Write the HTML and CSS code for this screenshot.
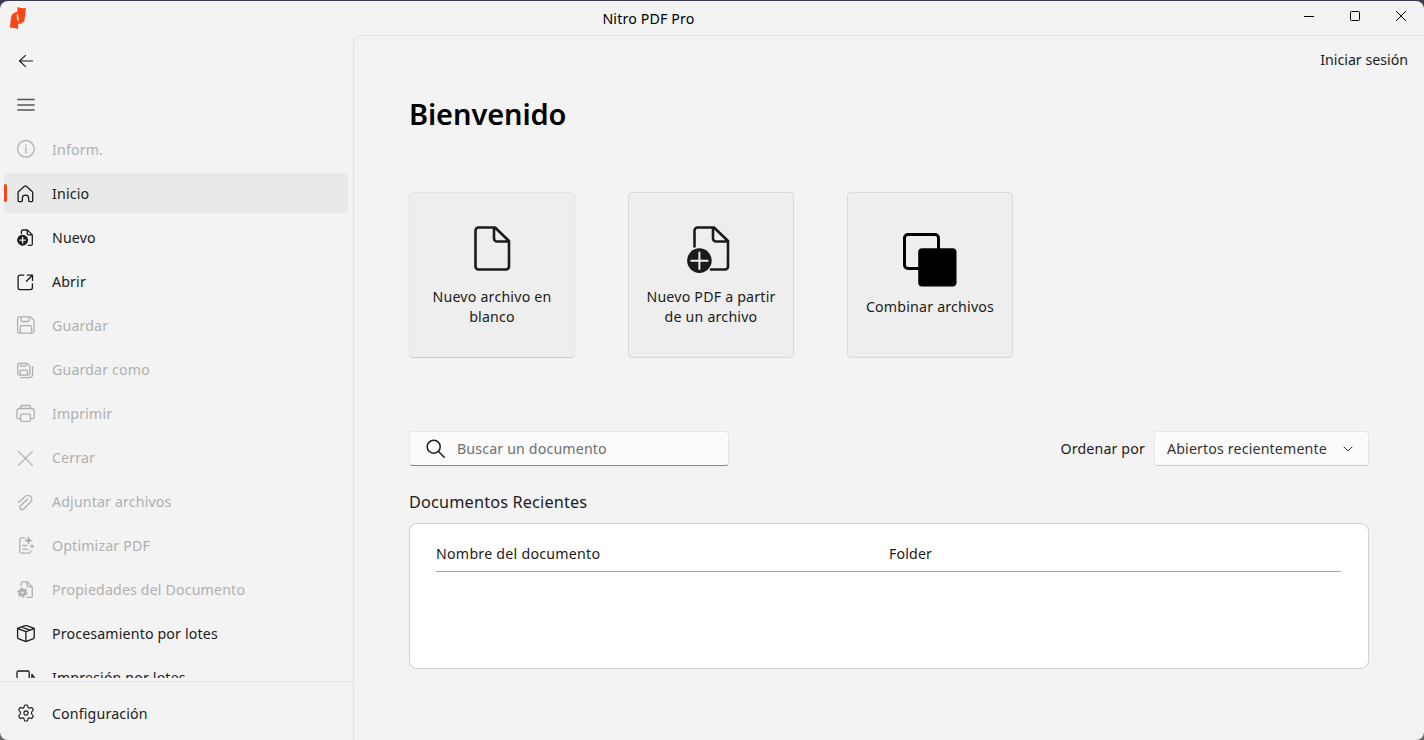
FILE: index.html
```html
<!DOCTYPE html>
<html lang="es">
<head>
    <meta charset="UTF-8">
    <meta name="viewport" content="width=device-width, initial-scale=1.0">
    <title>Nitro PDF Pro</title>
    <link rel="stylesheet" href="styles.css">
</head>
<body>
    <div class="window">
        <header class="titlebar">
            <svg class="logo" width="18" height="24" viewBox="0 0 18 24">
                <path d="M8.600 1Q12.500 2.500 16.900 2.100L15.700 12.800Q15.200 17 11 17.800L9.200 18 9 23Q5 21.500 .900 21.500L2 11.500Q2.800 6.800 8.300 5.800Z" fill="#fa4616"/>
                <path d="M8.300 6.500Q8.300 8.700 9.400 9.500Q10.300 12.500 9.200 16.500Q9 14.500 8 13.800Q7 10.500 8.300 6.500Z" fill="#fbd5c9"/>
            </svg>
            <span class="app-title">Nitro PDF Pro</span>
            <div class="window-buttons">
                <svg width="12" height="12" viewBox="0 0 12 12"><path d="M1 6.500h10"/></svg>
                <svg width="12" height="12" viewBox="0 0 12 12"><rect x="1.500" y="1.500" width="9" height="9" rx="1"/></svg>
                <svg width="12" height="12" viewBox="0 0 12 12"><path d="M1 1l10 10M11 1L1 11"/></svg>
            </div>
        </header>
        <div class="layout">
            <nav class="sidebar">
                <div class="nav-list">
                    <a class="nav-item">
                        <svg class="icon thin" viewBox="0 0 20 20"><path d="M16.500 10H3.500M9.500 4.300L3.500 10l6 5.700"/></svg>
                    </a>
                    <a class="nav-item">
                        <svg class="icon menu-icon" viewBox="0 0 20 20"><path d="M1.800 4.500h16.400M1.800 10h16.400M1.800 15h16.400"/></svg>
                    </a>
                    <a class="nav-item disabled">
                        <svg class="icon" viewBox="0 0 20 20"><circle cx="9.900" cy="9.800" r="8.300"/><path d="M9.900 8.700v5.200M9.900 5.600v.900"/></svg>
                        <span>Inform.</span>
                    </a>
                    <a class="nav-item active">
                        <svg class="icon" viewBox="0 0 20 20"><path d="M2.100 9.600c0-.5.2-.9.5-1.200l5.900-5.200c.5-.4 1.300-.4 1.800 0l5.900 5.200c.3.3.5.7.5 1.200v8c0 .6-.4 1-1 1h-2.100c-.6 0-1-.4-1-1v-2.700c0-2-.9-2.700-3.100-2.700s-3.100.7-3.100 2.700v2.700c0 .6-.4 1-1 1H3.100c-.6 0-1-.4-1-1z"/></svg>
                        <span>Inicio</span>
                    </a>
                    <a class="nav-item">
                        <svg class="icon" viewBox="0 0 20 20"><path d="M5.400 6.500v-2c0-.9.6-1.500 1.500-1.500h4.500l4.900 4.900v9c0 .9-.6 1.500-1.500 1.500h-2.400M11.200 3v3.500c0 .9.600 1.400 1.400 1.400h3.600"/><circle cx="6.600" cy="13.200" r="4.800" fill="currentColor"/><path d="M6.600 10.500v5.400M3.900 13.200h5.400" stroke="#f3f3f3"/></svg>
                        <span>Nuevo</span>
                    </a>
                    <a class="nav-item">
                        <svg class="icon" viewBox="0 0 20 20"><path d="M7.800 4.100H4.100a2 2 0 0 0-2 2v10.500a2 2 0 0 0 2 2h10.300a2 2 0 0 0 2-2v-3.800M11.200 4.100h5.300v5.300M16.400 4.200l-6 6"/></svg>
                        <span>Abrir</span>
                    </a>
                    <a class="nav-item disabled">
                        <svg class="icon" viewBox="0 0 20 20"><path d="M3.300 1.800h11l3.700 3.700v10.800c0 1-.7 1.800-1.800 1.800H3.300c-1 0-1.700-.8-1.700-1.800V3.500c0-1 .7-1.700 1.700-1.700zM5.200 1.800v3.400c0 .8.500 1.300 1.300 1.300h5.200c.8 0 1.300-.5 1.300-1.300V1.800M4.200 18.100v-6c0-.9.5-1.400 1.400-1.400h8.600c.9 0 1.400.5 1.400 1.400v6"/></svg>
                        <span>Guardar</span>
                    </a>
                    <a class="nav-item disabled">
                        <svg class="icon" viewBox="0 0 20 20"><path d="M3.300 4.300h7.800l2.800 2.800v7.400c0 1-.6 1.600-1.600 1.600h-9c-.9 0-1.500-.6-1.500-1.600V5.800c0-.9.600-1.500 1.500-1.500zM4.700 4.300v1.900c0 .7.400 1 1 1h3.400c.7 0 1-.4 1-1V4.300M4.200 16v-3.900c0-.7.400-1 1-1h5.200c.7 0 1 .4 1 1V16M4.700 18.600h8.200c2.300 0 3.700-1.400 3.700-3.700V7.600"/></svg>
                        <span>Guardar como</span>
                    </a>
                    <a class="nav-item disabled">
                        <svg class="icon" viewBox="0 0 20 20"><path d="M4.600 15.900H2.700c-1.100 0-1.800-.7-1.800-1.800V7.900c0-1.400 1-2.400 2.500-2.400h12.300c1.500 0 2.500 1 2.500 2.400v6.200c0 1.100-.7 1.800-1.800 1.800h-2M4.600 5.500V3.800c0-.8.5-1.300 1.300-1.300h7.300c.8 0 1.300.5 1.300 1.300v1.700"/><rect x="4.600" y="11.100" width="9.800" height="7.200" rx="1.300"/></svg>
                        <span>Imprimir</span>
                    </a>
                    <a class="nav-item disabled">
                        <svg class="icon" viewBox="0 0 20 20"><path d="M2.400 4.400l14 14M16.400 4.400l-14 14"/></svg>
                        <span>Cerrar</span>
                    </a>
                    <a class="nav-item disabled">
                        <svg class="icon" viewBox="0 0 20 20"><path d="M2.300 11.400l6.300-5.500c1.700-1.500 4.500-1.700 6.100-.4 1.600 1.400 1.600 3.600.1 5.200l-6.900 7c-1 1-2.600 1.100-3.500.2s-.8-2.200.2-3.200l6.900-6.500"/></svg>
                        <span>Adjuntar archivos</span>
                    </a>
                    <a class="nav-item disabled">
                        <svg class="icon" viewBox="0 0 20 20"><path d="M9.200 2.800H5.300c-.9 0-1.500.6-1.500 1.500v12.300c0 .9.600 1.500 1.500 1.500h7.800c.9 0 1.500-.6 1.500-1.500v-.8M6.700 10.500h4M6.700 14.200h5"/><path class="solid" d="M12.500 1.100l1.300 3.100 3.100 1.300-3.100 1.300-1.300 3.200-1.300-3.200-3.100-1.300 3.100-1.300zM16 8.300l.8 2.200 2.200.8-2.200.8-.8 2.200-.8-2.200-2.200-.8 2.200-.8z"/></svg>
                        <span>Optimizar PDF</span>
                    </a>
                    <a class="nav-item disabled">
                        <svg class="icon" viewBox="0 0 20 20"><path d="M5.300 6.500V4.400c0-.9.6-1.500 1.500-1.500h4.500l5 5v9c0 .9-.6 1.500-1.500 1.500h-3.500M11.200 2.900v3.600c0 .9.500 1.400 1.400 1.400h3.600"/><circle cx="6.400" cy="13.600" r="2.500" stroke-width="2.600"/><circle cx="6.400" cy="13.600" r="4.200" stroke-width="1.800" stroke-linecap="butt" stroke-dasharray="2.200 2.200"/></svg>
                        <span>Propiedades del Documento</span>
                    </a>
                    <a class="nav-item">
                        <svg class="icon" viewBox="0 0 20 20"><path d="M9.200 2.700c.5-.2.900-.2 1.400 0l7 2.500c.4.2.6.4.6.9v8.500c0 .5-.2.800-.7 1l-7 2.700c-.4.2-.8.2-1.200 0l-7-2.700c-.5-.2-.7-.5-.7-1V6.100c0-.5.2-.7.600-.9zM1.800 5.700l8.100 3 8.100-3M9.900 8.700v9.700M5.700 4.200l8.200 3"/></svg>
                        <span>Procesamiento por lotes</span>
                    </a>
                    <a class="nav-item">
                        <svg class="icon" viewBox="0 0 20 20"><path d="M3.500 14.500H1V5.500C1 4.600 1.600 4 2.500 4h9.200c.9 0 1.500.6 1.500 1.500V14H6M15.900 7.500v8.500H6.500M15.900 7.500l2.600 3.300v5"/></svg>
                        <span>Impresión por lotes</span>
                    </a>
                </div>
                <div class="nav-footer">
                    <a class="nav-item">
                        <svg class="icon gear" viewBox="0 0 20 20"><circle cx="10" cy="10" r="2.100"/><path d="M8.500 2.200Q10 1.800 11.500 2.200L12 4.400Q12.500 5.200 13.500 5.100L15.700 4.500Q16.800 5.600 17.300 7L15.800 8.800Q15.200 10 15.800 11.200L17.300 13Q16.800 14.400 15.700 15.500L13.500 14.900Q12.500 14.800 12 15.600L11.500 17.800Q10 18.200 8.500 17.800L8 15.600Q7.500 14.800 6.500 14.900L4.300 15.500Q3.200 14.400 2.700 13L4.200 11.200Q4.800 10 4.200 8.800L2.700 7Q3.200 5.600 4.300 4.500L6.500 5.100Q7.500 5.200 8 4.400Z"/></svg>
                        <span>Configuración</span>
                    </a>
                </div>
            </nav>
            <main class="content">
                <a class="sign-in">Iniciar sesión</a>
                <h1>Bienvenido</h1>
                <div class="cards">
                    <div class="card raised">
                        <svg width="48" height="50" viewBox="0 0 48 50"><path d="M10.500 2.500h16.500L41 16V41.500a3 3 0 0 1-3 3H10.500a3 3 0 0 1-3-3V5.500a3 3 0 0 1 3-3zM26 2.700v10.800a3 3 0 0 0 3 3h11.500"/></svg>
                        <span>Nuevo archivo en blanco</span>
                    </div>
                    <div class="card">
                        <svg width="48" height="50" viewBox="0 0 48 50"><path d="M7.500 21.500V5.500a3 3 0 0 1 3-3h16.500L41 16V41.500a3 3 0 0 1-3 3H24M26 2.700v10.800a3 3 0 0 0 3 3h11.500"/><circle class="dot" cx="12.400" cy="35.600" r="12.300"/><path class="plus" d="M12.400 27.500v16.400M4.200 35.700h16.400"/></svg>
                        <span>Nuevo PDF a partir de un archivo</span>
                    </div>
                    <div class="card combine">
                        <svg width="54" height="54" viewBox="0 0 54 54"><rect x="1.500" y="1.500" width="34" height="34" rx="3.500"/><rect class="front" x="15.200" y="15.200" width="38.300" height="38.300" rx="4"/></svg>
                        <span>Combinar archivos</span>
                    </div>
                </div>
                <div class="toolbar">
                    <div class="search">
                        <svg width="20" height="20" viewBox="0 0 20 20"><circle cx="7.700" cy="7.700" r="6.500"/><path d="M12.500 12.500l5.700 5.700"/></svg>
                        <span>Buscar un documento</span>
                    </div>
                    <div class="sort">
                        <span class="sort-label">Ordenar por</span>
                        <div class="select">
                            <span>Abiertos recientemente</span>
                            <svg width="10" height="6" viewBox="0 0 10 6"><path d="M1 1L5 5 9 1"/></svg>
                        </div>
                    </div>
                </div>
                <h2>Documentos Recientes</h2>
                <div class="documents">
                    <div class="documents-head">
                        <span class="doc-name">Nombre del documento</span>
                        <span class="doc-folder">Folder</span>
                    </div>
                </div>
            </main>
        </div>
    </div>
</body>
</html>
```
FILE: styles.css
```css
* {
    box-sizing: border-box;
}

body {
    margin: 0;
    height: 740px;
    padding-top: 1px;
    background: linear-gradient(#3b3950 50%, #6b6b6b 50%);
    font-family: "Noto Sans", "Open Sans", sans-serif;
    font-size: 14.2px;
    letter-spacing: 0.15px;
    color: #1b1b1b;
    overflow: hidden;
}

svg {
    display: block;
    flex: none;
    fill: none;
    stroke: currentColor;
    stroke-linecap: round;
    stroke-linejoin: round;
}

.window {
    display: flex;
    flex-direction: column;
    height: 739px;
    background: #f3f3f3;
    border-radius: 8px;
    overflow: hidden;
}

.titlebar {
    display: grid;
    grid-template-columns: 1fr auto 1fr;
    height: 34px;
    flex: none;
}

.logo {
    margin: 5px 0 0 9px;
    stroke: none;
}

.app-title {
    line-height: 35px;
    margin-right: 127px;
    color: #000;
}

.window-buttons {
    display: flex;
    justify-content: flex-end;
    gap: 34px;
    padding: 9px 17px 0 0;
    color: #000;
}

.window-buttons svg {
    stroke-linecap: butt;
}

.layout {
    display: flex;
    flex: 1;
    min-height: 0;
}

/* sidebar */

.sidebar {
    display: flex;
    flex-direction: column;
    width: 353px;
    flex: none;
}

.nav-list {
    display: flex;
    flex-direction: column;
    gap: 4px;
    height: 643px;
    padding: 6px 5px 0 4px;
    overflow: hidden;
}

.nav-item {
    display: flex;
    align-items: center;
    gap: 16px;
    height: 40px;
    flex: none;
    padding-left: 12px;
    border-radius: 4px;
    white-space: nowrap;
}

.nav-item.active {
    background: #e9e9e9;
    position: relative;
}

.nav-item.active::before {
    content: "";
    position: absolute;
    left: 0;
    top: 11px;
    width: 3px;
    height: 18px;
    border-radius: 2px;
    background: #fa4616;
}

.nav-item.disabled {
    color: #b0b0b0;
}

.icon {
    width: 20px;
    height: 20px;
    stroke-width: 1.3;
}

.icon.thin,
.icon.gear {
    stroke-width: 1.1;
}

.menu-icon {
    color: #555;
}

.icon .solid {
    fill: currentColor;
    stroke: none;
}

.nav-footer {
    flex: 1;
    margin-top: 3px;
    padding: 11px 4px 0;
    border-top: 1px solid #e5e5e5;
}

/* main area */

.content {
    display: flex;
    flex-direction: column;
    flex: 1;
    padding: 0 55px;
    border: solid #e3e3e3;
    border-width: 1px 0 0 1px;
    border-top-left-radius: 8px;
}

.sign-in {
    align-self: flex-end;
    height: 20px;
    line-height: 20px;
    margin: 14px -39px 0 0;
    letter-spacing: 0;
}

h1 {
    height: 40px;
    margin: 24px 0 0;
    font-size: 29px;
    font-weight: 600;
    letter-spacing: -0.1px;
    line-height: 40px;
    color: #000;
}

.cards {
    display: flex;
    gap: 53px;
    margin-top: 58px;
}

.card {
    display: flex;
    flex-direction: column;
    align-items: center;
    width: 166px;
    height: 166px;
    padding: 32px 14px 0;
    background: #eee;
    border: 1px solid #d9d9d9;
    border-radius: 4px;
    text-align: center;
    line-height: 20px;
    letter-spacing: 0.2px;
}

.card.raised {
    border-color: #e3e3e3;
    border-bottom-color: #c8c8c8;
}

.card svg {
    stroke-width: 2.6;
    margin-bottom: 12px;
}

.card .dot {
    fill: currentColor;
    stroke: none;
}

.card .plus {
    stroke: #eee;
    stroke-width: 2;
}

.card.combine {
    padding: 40px 10px 0;
}

.card.combine svg {
    margin-bottom: 10px;
    color: #000;
    stroke-width: 3;
}

.card .front {
    fill: #000;
    stroke: none;
}

.toolbar {
    display: flex;
    justify-content: space-between;
    height: 35px;
    margin-top: 73px;
}

.search {
    display: flex;
    align-items: center;
    gap: 11px;
    width: 320px;
    padding-left: 16px;
    background: #fbfbfb;
    border: 1px solid #e5e5e5;
    border-bottom-color: #868686;
    border-radius: 4px;
    color: #6e6e6e;
}

.search svg {
    color: #1b1b1b;
    stroke-width: 1.5;
}

.sort {
    display: flex;
    align-items: center;
    gap: 9px;
}

.select {
    display: flex;
    align-items: center;
    justify-content: space-between;
    width: 215px;
    height: 35px;
    padding: 0 15px 0 12px;
    background: #fbfbfb;
    border: 1px solid #e5e5e5;
    border-bottom-color: #ccc;
    border-radius: 4px;
    color: #333;
}

h2 {
    height: 24px;
    margin: 24px 0 0;
    font-size: 16.3px;
    font-weight: 400;
    line-height: 24px;
}

.documents {
    height: 146px;
    margin-top: 9px;
    padding: 15px 27px 0 26px;
    background: #fff;
    border: 1px solid #d1d1d1;
    border-radius: 8px;
}

.documents-head {
    display: grid;
    grid-template-columns: 453px 1fr;
    height: 33px;
    line-height: 30px;
    border-bottom: 1px solid #a6a6a6;
}

.doc-name {
    letter-spacing: 0.25px;
}
```
